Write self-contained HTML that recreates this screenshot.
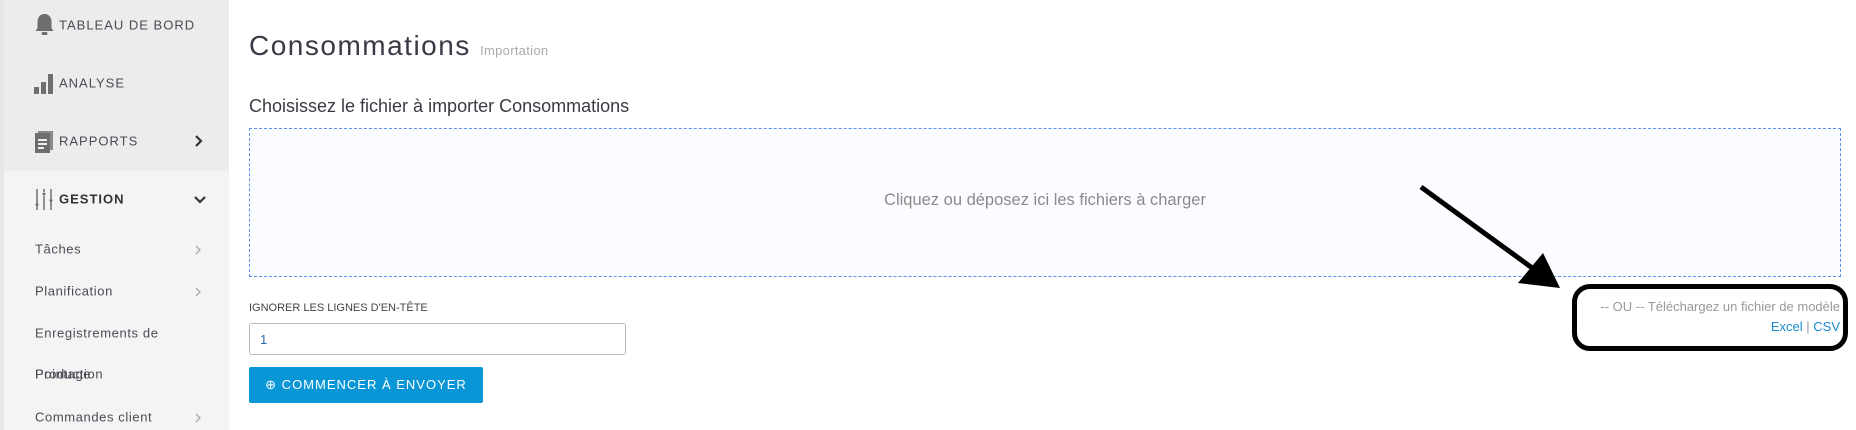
<!DOCTYPE html>
<html><head><meta charset="utf-8"><style>
*{margin:0;padding:0;box-sizing:border-box}
body{width:1856px;height:430px;overflow:hidden;background:#fff;font-family:"Liberation Sans",sans-serif;position:relative}
.sb{position:absolute;left:0;top:0;width:229px;height:430px;background:#f4f4f4}
.sbt{position:absolute;left:0;top:0;width:229px;height:171px;background:#ececec}
.sbl{position:absolute;left:0;top:0;width:4px;height:430px;background:#e6e6e6}
.t{position:absolute;font-size:13px;color:#4a4a55;letter-spacing:1px;transform:translateY(-50%);white-space:nowrap}
.s{position:absolute;font-size:13px;color:#4a4a55;letter-spacing:.6px;transform:translateY(-50%);white-space:nowrap;left:35px}
.a{position:absolute;white-space:nowrap}
.cv{position:absolute;left:194px}
</style></head><body>
<div class="sb"></div><div class="sbt"></div><div class="sbl"></div>
<svg style="position:absolute;left:35px;top:13px" width="19" height="24" viewBox="0 0 19 24"><path d="M9.5 1c-5 0-7 4-7 8v6l-2 3h18l-2-3V9c0-4-2-8-7-8z" fill="#6e6e6e"/><rect x="6.5" y="19" width="6" height="3" rx="1.5" fill="#6e6e6e"/></svg>
<div class="t" style="left:59px;top:25px">TABLEAU DE BORD</div>
<svg style="position:absolute;left:34px;top:73px" width="20" height="22"><rect x="0" y="14" width="5" height="7" fill="#6e6e6e"/><rect x="7" y="9" width="5" height="12" fill="#6e6e6e"/><rect x="14" y="1" width="5" height="20" fill="#6e6e6e"/></svg>
<div class="t" style="left:59px;top:83px">ANALYSE</div>
<svg style="position:absolute;left:35px;top:131px" width="19" height="22"><rect x="3" y="0" width="15" height="19" fill="#8a8a8a"/><rect x="0" y="2" width="15" height="20" fill="#6e6e6e"/><rect x="3" y="8" width="9" height="2" fill="#eee"/><rect x="3" y="12" width="9" height="2" fill="#eee"/><rect x="3" y="16" width="6" height="2" fill="#eee"/></svg>
<div class="t" style="left:59px;top:141px">RAPPORTS</div>
<svg class="cv" style="top:135px" width="10" height="12"><path d="M2 1l5 5-5 5" stroke="#333" stroke-width="2.2" fill="none"/></svg>
<svg style="position:absolute;left:35px;top:189px" width="18" height="22"><g stroke="#6e6e6e" stroke-width="1.5"><line x1="2" y1="0" x2="2" y2="14"/><line x1="2" y1="17" x2="2" y2="21"/><line x1="9" y1="0" x2="9" y2="3"/><line x1="9" y1="7" x2="9" y2="21"/><line x1="16" y1="0" x2="16" y2="10"/><line x1="16" y1="13" x2="16" y2="21"/></g><circle cx="2" cy="15.5" r="1.5" fill="#6e6e6e"/><circle cx="9" cy="5" r="1.5" fill="#6e6e6e"/><circle cx="16" cy="11.5" r="1.5" fill="#6e6e6e"/></svg>
<div class="t" style="left:59px;top:199px;font-weight:bold;color:#333">GESTION</div>
<svg class="cv" style="top:195px" width="12" height="10"><path d="M1 2l5 5 5-5" stroke="#333" stroke-width="2.2" fill="none"/></svg>
<div class="s" style="top:249px">Tâches</div>
<svg class="cv" style="top:245px" width="8" height="10"><path d="M2 1l4 4-4 4" stroke="#aaa" stroke-width="1.3" fill="none"/></svg>
<div class="s" style="top:291px">Planification</div>
<svg class="cv" style="top:287px" width="8" height="10"><path d="M2 1l4 4-4 4" stroke="#aaa" stroke-width="1.3" fill="none"/></svg>
<div class="s" style="top:333px">Enregistrements de</div>
<div class="s" style="top:374px">Production</div><div class="s" style="top:374px">Pointage</div>
<div class="s" style="top:417px">Commandes client</div>
<svg class="cv" style="top:413px" width="8" height="10"><path d="M2 1l4 4-4 4" stroke="#aaa" stroke-width="1.3" fill="none"/></svg>

<div class="a" style="left:249px;top:30px;font-size:28px;color:#3a3a45;letter-spacing:1.5px">Consommations <span style="font-size:13px;color:#aaa;letter-spacing:.3px">Importation</span></div>
<div class="a" style="left:249px;top:96px;font-size:18px;color:#3a3a45">Choisissez le fichier à importer Consommations</div>
<div style="position:absolute;left:249px;top:128px;width:1592px;height:149px;border:1px dashed #5b8ff0;background:#fafcff"></div>
<div class="a" style="left:249px;width:1592px;text-align:center;top:191px;font-size:16.5px;color:#8a8a8a">Cliquez ou déposez ici les fichiers à charger</div>
<div class="a" style="left:249px;top:302px;font-size:11px;color:#444">IGNORER LES LIGNES D'EN-TÊTE</div>
<div style="position:absolute;left:249px;top:323px;width:377px;height:32px;border:1px solid #bbb;border-radius:3px;font-size:13px;color:#2b6ea8;padding:8px 10px">1</div>
<div style="position:absolute;left:249px;top:367px;width:234px;height:36px;background:#0996d6;border-radius:2px;color:#fff;font-size:13px;letter-spacing:1px;text-align:center;line-height:36px">⊕ COMMENCER À ENVOYER</div>
<div class="a" style="right:16px;top:299px;font-size:13px;color:#999">-- OU -- Téléchargez un fichier de modèle</div>
<div class="a" style="right:16px;top:319px;font-size:13px;color:#999"><span style="color:#1a8ad0">Excel</span> | <span style="color:#1a8ad0">CSV</span></div>
<div style="position:absolute;left:1572px;top:284px;width:276px;height:67px;border:5px solid #000;border-radius:18px"></div>
<svg style="position:absolute;left:0;top:0" width="1856" height="430"><line x1="1421" y1="187" x2="1535" y2="270" stroke="#000" stroke-width="5"/><polygon points="1560,288 1518,283 1543,253" fill="#000"/></svg>
</body></html>
